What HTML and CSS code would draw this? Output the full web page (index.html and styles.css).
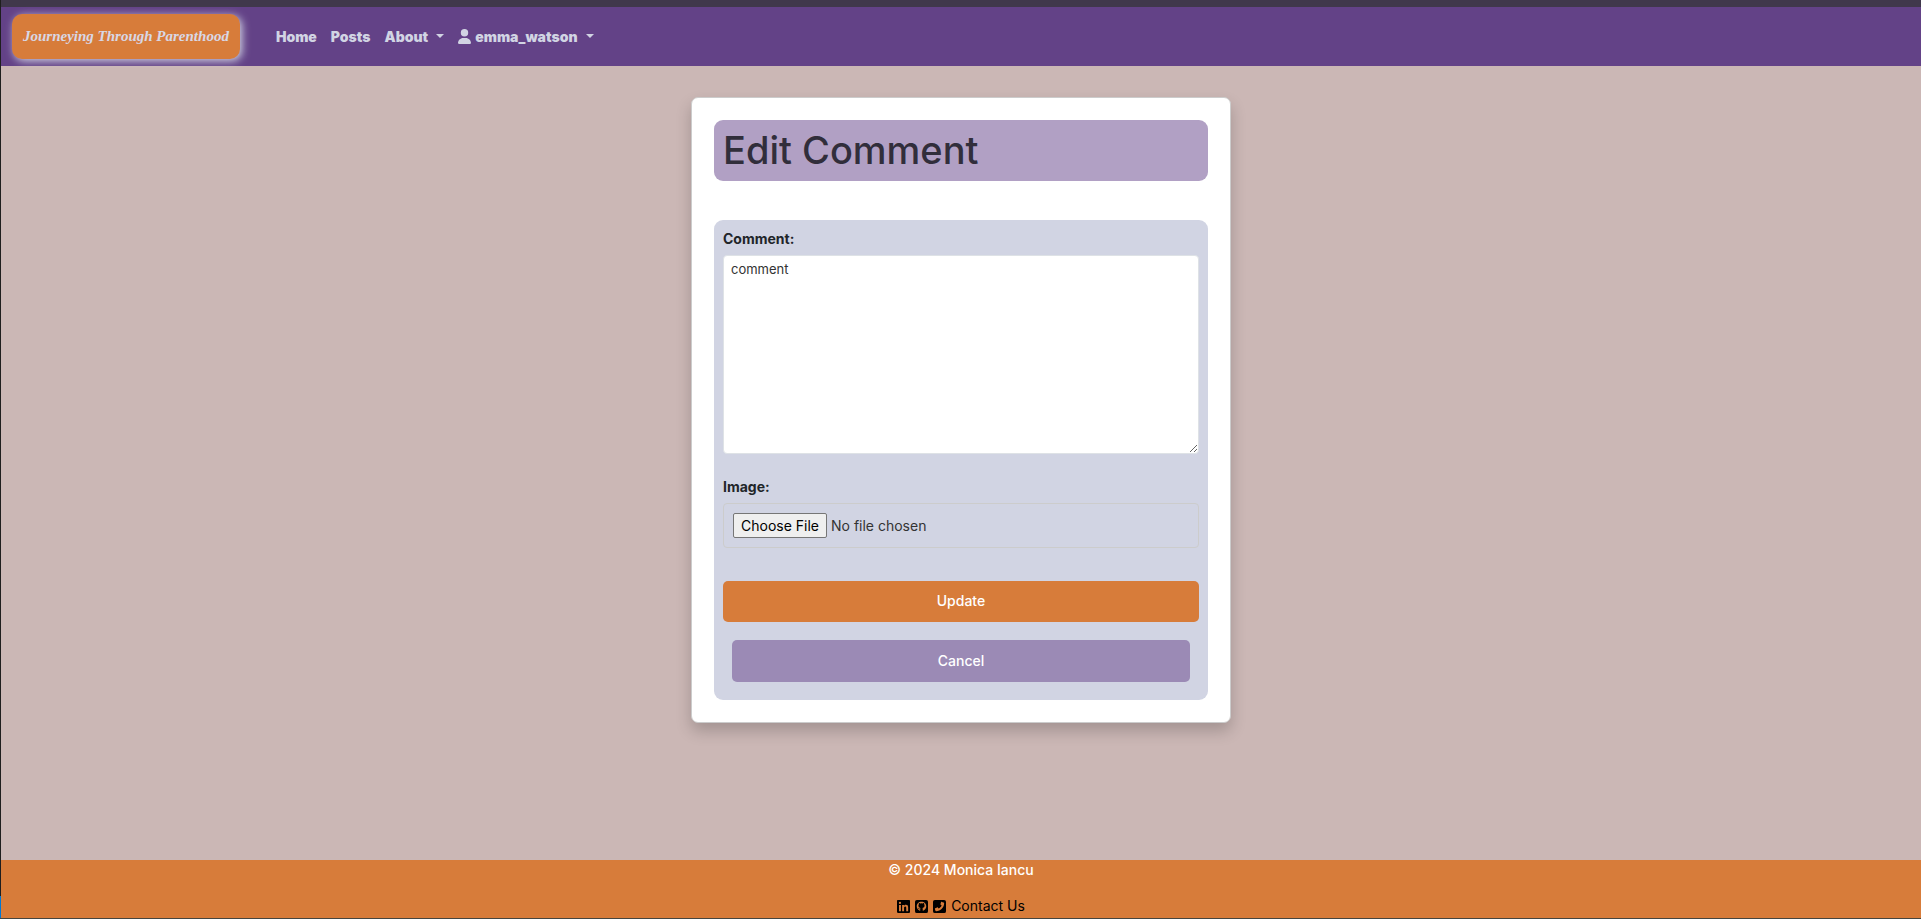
FILE: index.html
```
<!DOCTYPE html>
<html lang="en">
<head>
<meta charset="utf-8">
<meta name="viewport" content="width=device-width, initial-scale=1">
<title>Edit Comment</title>
<link rel="stylesheet" href="styles.css">
</head>
<body>
<div class="page">
  <header class="navbar">
    <a class="brand" href="#">Journeying Through Parenthood</a>
    <nav class="nav-links">
      <a class="nav-link" href="#">Home</a>
      <a class="nav-link" href="#">Posts</a>
      <button class="nav-link" type="button">About<span class="caret"></span></button>
      <button class="nav-link" type="button"><svg class="user-icon" viewBox="0 0 448 512" aria-hidden="true"><path d="M224 256A128 128 0 1 0 224 0a128 128 0 1 0 0 256zm-45.700 48C79.800 304 0 383.800 0 482.300C0 498.700 13.300 512 29.700 512H418.300c16.400 0 29.700-13.300 29.700-29.700C448 383.800 368.200 304 269.700 304H178.300z"/></svg>emma_watson<span class="caret"></span></button>
    </nav>
  </header>
  <main class="main">
    <section class="card">
      <h1 class="title">Edit Comment</h1>
      <form class="form">
        <label class="label" for="comment">Comment:</label>
        <textarea class="comment" id="comment">comment</textarea>
        <label class="label" for="image">Image:</label>
        <input class="file" id="image" type="file">
        <button class="btn update" type="button">Update</button>
        <a class="btn cancel" href="#">Cancel</a>
      </form>
    </section>
  </main>
  <footer class="footer">
    <p class="copyright">© 2024 Monica Iancu</p>
    <div class="contact">
      <a class="social" href="#" aria-label="LinkedIn"><svg viewBox="0 0 448 448"><path d="M416 0H31.900C14.300 0 0 14.500 0 32.300v383.400C0 433.500 14.300 448 31.900 448H416c17.600 0 32-14.500 32-32.300V32.300C448 14.500 433.600 0 416 0zM135.400 384H69V170.200h66.500V384zM102.200 141a38.500 38.500 0 1 1 0-77 38.500 38.500 0 0 1 0 77zM384.300 384h-66.400V280c0-24.800-.5-56.700-34.500-56.700-34.600 0-39.900 27-39.900 54.900V384h-66.400V170.200h63.700v29.200h.9c8.900-16.800 30.600-34.500 62.900-34.500 67.200 0 79.700 44.300 79.700 101.900V384z"/></svg></a>
      <a class="social" href="#" aria-label="GitHub"><svg viewBox="0 0 448 448"><path fill-rule="evenodd" d="M64 0h320a64 64 0 0 1 64 64v320a64 64 0 0 1-64 64H64a64 64 0 0 1-64-64V64A64 64 0 0 1 64 0zM224 58C130 58 60 130 60 218c0 73 45 132 108 154 9 2 12-4 12-9v-42c-46 10-56-20-56-20-8-19-18-25-18-25-15-11 1-10 1-10 17 1 26 18 26 18 15 26 40 19 49 14 1-11 6-19 11-23-37-4-75-18-75-82 0-18 6-34 17-46-2-4-8-20 2-43 0 0 14-4 45 17a155 155 0 0 1 84 0c31-21 45-17 45-17 10 23 4 39 2 43 11 12 17 28 17 46 0 64-38 78-75 82 6 5 12 15 12 31v57c0 5 3 11 12 9 63-22 109-81 109-154C388 130 318 58 224 58z"/></svg></a>
      <a class="social" href="#" aria-label="Phone"><svg viewBox="0 0 448 448"><path fill-rule="evenodd" d="M64 0h320a64 64 0 0 1 64 64v320a64 64 0 0 1-64 64H64a64 64 0 0 1-64-64V64A64 64 0 0 1 64 0zM278 73c8-9 20-10 30-7l56 16c12 3 20 12 20 24 0 154-124 278-278 278-12 0-21-8-24-20l-16-56c-3-10 1-22 11-27l64-26c9-4 19-1 26 7l26 33c46-22 83-59 105-105l-33-26c-8-7-11-17-7-26z"/></svg></a>
      <a class="contact-link" href="#">Contact Us</a>
    </div>
  </footer>
</div>
</body>
</html>
```
FILE: styles.css
```
* { box-sizing: border-box; }

body {
  margin: 0;
  font-family: Inter, "Open Sans", sans-serif;
  font-size: 14px;
  line-height: 20px;
  color: #212529;
}

a { color: inherit; text-decoration: none; }

.page {
  min-height: 100vh;
  display: flex;
  flex-direction: column;
  border-bottom: 1px solid #45463f;
  padding-left: 1px;
  background:
    linear-gradient(#0078d4, #0078d4) left bottom / 1px 22px no-repeat,
    linear-gradient(#1e1e1e, #1e1e1e) left top / 1px 100% no-repeat,
    #cbb7b5;
}

.navbar {
  display: flex;
  align-items: center;
  gap: 29px;
  padding: 7px 11px;
  background: #634287;
  border-top: 7px solid #40384b;
}

.brand {
  padding: 12px 11px 13px;
  border-radius: 10px;
  background: #d77c3a;
  color: #d8d8e6;
  box-shadow: 2px 2px 8px #d1d4e3;
  font-family: "Liberation Serif", serif;
  font-size: 15px;
  font-style: italic;
  font-weight: 700;
}

.nav-links { display: flex; }

.nav-link {
  display: flex;
  align-items: center;
  padding: 8px 7px;
  border: 0;
  background: none;
  color: #d1d4e3;
  font: inherit;
  font-weight: 900;
  cursor: pointer;
}

.caret {
  margin: 0 0 2px 8px;
  border: 4px solid transparent;
  border-top-color: currentColor;
  border-bottom: 0;
}

.user-icon {
  width: 13px;
  height: 15px;
  margin-right: 4px;
  fill: currentColor;
}

.main {
  flex: 1;
  padding: 31px 16px;
}

.card {
  max-width: 540px;
  margin: 0 auto;
  padding: 22px;
  background: #fff;
  border: 1px solid #ccc;
  border-radius: 7px;
  box-shadow: 0 8px 16px rgba(0, 0, 0, 0.2);
}

.title {
  margin: 0 0 39px;
  padding: 8px 9px;
  border-radius: 9px;
  background: #b1a0c4;
  color: #312e3b;
  font-size: 38px;
  font-weight: 500;
  line-height: 45px;
}

.form {
  display: flex;
  flex-direction: column;
  padding: 9px 9px 18px;
  border-radius: 9px;
  background: #d1d4e3;
}

.label {
  margin-bottom: 6px;
  font-weight: 700;
}

.comment {
  height: 199px;
  margin-bottom: 23px;
  padding: 3px 7px;
  border: 1px solid #dee2e6;
  border-radius: 4px;
  background: #fff;
  color: #333;
  font: inherit;
  font-size: 13px;
  resize: vertical;
}

.file {
  height: 45px;
  margin-bottom: 33px;
  padding: 9px;
  border: 1px solid #ccc;
  border-radius: 4px;
  color: #333;
  font: inherit;
}

.file::file-selector-button {
  height: 25px;
  padding: 1px 7px;
  border: 1px solid #767676;
  border-radius: 2px;
  background: #efefef;
  color: #000;
  font: inherit;
}

.btn {
  padding: 11px;
  border: 0;
  border-radius: 5px;
  color: #fff;
  font: inherit;
  font-weight: 500;
  text-align: center;
  cursor: pointer;
}

.update {
  padding: 10px 11px 11px;
  background: #d77c3a;
}

.cancel {
  margin: 18px 9px 0;
  background: #9b8ab5;
}

.footer {
  padding-bottom: 2px;
  background: #d77c3a;
  text-align: center;
}

.copyright {
  margin: 0 0 16px;
  color: #fff;
  font-weight: 500;
}

.contact {
  display: flex;
  justify-content: center;
  align-items: center;
  gap: 5px;
  color: #000;
}

.social {
  display: block;
  width: 13px;
  height: 13px;
}

.social svg { display: block; }
```
